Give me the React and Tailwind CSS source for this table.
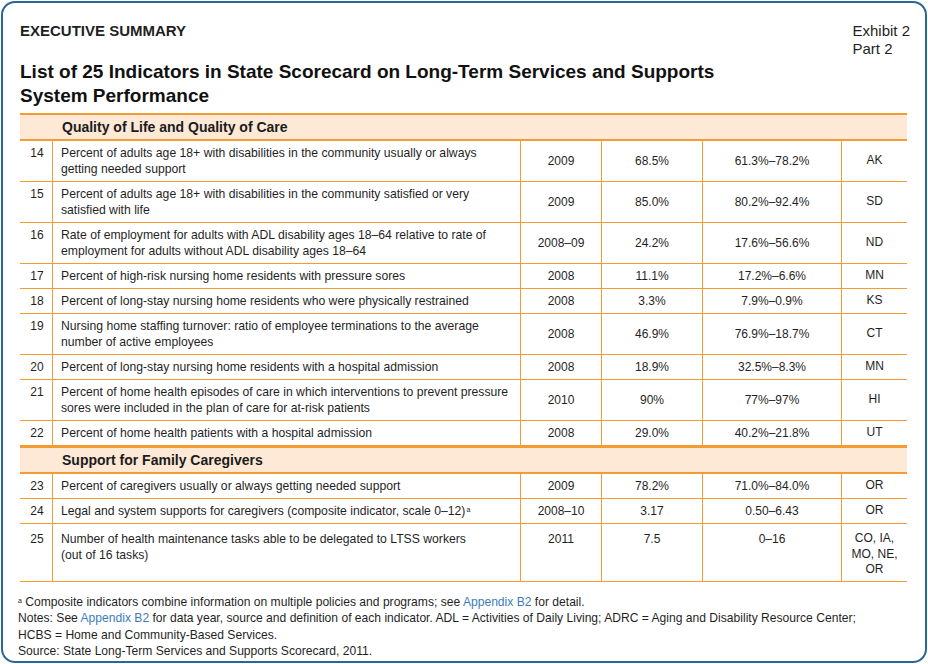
import React from "react";

const OR = "border-[#f59b33]";

const sec1 = [
  { n: "14", d: ["Percent of adults age 18+ with disabilities in the community usually or always", "getting needed support"], y: "2009", v: "68.5%", r: "61.3%–78.2%", s: ["AK"], h: "h-[41px]" },
  { n: "15", d: ["Percent of adults age 18+ with disabilities in the community satisfied or very", "satisfied with life"], y: "2009", v: "85.0%", r: "80.2%–92.4%", s: ["SD"], h: "h-[41px]" },
  { n: "16", d: ["Rate of employment for adults with ADL disability ages 18–64 relative to rate of", "employment for adults without ADL disability ages 18–64"], y: "2008–09", v: "24.2%", r: "17.6%–56.6%", s: ["ND"], h: "h-[41px]" },
  { n: "17", d: ["Percent of high-risk nursing home residents with pressure sores"], y: "2008", v: "11.1%", r: "17.2%–6.6%", s: ["MN"], h: "h-[25px]" },
  { n: "18", d: ["Percent of long-stay nursing home residents who were physically restrained"], y: "2008", v: "3.3%", r: "7.9%–0.9%", s: ["KS"], h: "h-[25px]" },
  { n: "19", d: ["Nursing home staffing turnover: ratio of employee terminations to the average", "number of active employees"], y: "2008", v: "46.9%", r: "76.9%–18.7%", s: ["CT"], h: "h-[41px]" },
  { n: "20", d: ["Percent of long-stay nursing home residents with a hospital admission"], y: "2008", v: "18.9%", r: "32.5%–8.3%", s: ["MN"], h: "h-[25px]" },
  { n: "21", d: ["Percent of home health episodes of care in which interventions to prevent pressure", "sores were included in the plan of care for at-risk patients"], y: "2010", v: "90%", r: "77%–97%", s: ["HI"], h: "h-[41px]" },
  { n: "22", d: ["Percent of home health patients with a hospital admission"], y: "2008", v: "29.0%", r: "40.2%–21.8%", s: ["UT"], h: "h-[25px]" },
];

const sec2 = [
  { n: "23", d: ["Percent of caregivers usually or always getting needed support"], y: "2009", v: "78.2%", r: "71.0%–84.0%", s: ["OR"], h: "h-[25px]" },
  { n: "24", d: ["Legal and system supports for caregivers (composite indicator, scale 0–12)"], sup: true, y: "2008–10", v: "3.17", r: "0.50–6.43", s: ["OR"], h: "h-[25px]" },
  { n: "25", d: ["Number of health maintenance tasks able to be delegated to LTSS workers", "(out of 16 tasks)"], y: "2011", v: "7.5", r: "0–16", s: ["CO, IA,", "MO, NE,", "OR"], h: "h-[58px]", top: true },
];

function Row({ row }) {
  const al = row.top ? "items-start pt-[7px]" : "items-center";
  const cell = `flex ${al} border-r ${OR}`;
  return (
    <div className={`grid grid-cols-[33px_468px_81px_101px_139px_65px] border-b ${OR} ${row.h}`}>
      <div className={`${cell} ${row.top ? "" : "!items-start pt-[4px]"} justify-center pl-[2px]`}>
        <span className="leading-4">{row.n}</span>
      </div>
      <div className={`${cell} ${row.top ? "" : "!items-start pt-[4px]"} pl-[8px]`}>
        <div className="leading-4 whitespace-nowrap text-[12.2px]">
          {row.d.map((l, i) => (
            <div key={i}>
              {l}
              {row.sup && i === row.d.length - 1 ? <sup className="text-[7px] ml-px">a</sup> : null}
            </div>
          ))}
        </div>
      </div>
      <div className={`${cell} justify-center`}><span className="leading-4">{row.y}</span></div>
      <div className={`${cell} justify-center`}><span className="leading-4">{row.v}</span></div>
      <div className={`${cell} justify-center`}><span className="leading-4">{row.r}</span></div>
      <div className={`flex ${al} justify-center`}>
        <div className="text-center leading-[15.5px]">
          {row.s.map((l, i) => (
            <div key={i}>{l}</div>
          ))}
        </div>
      </div>
    </div>
  );
}

function Section({ title }) {
  return (
    <div className={`h-[28px] border-y-2 ${OR} bg-[#fde9d5] flex items-center pl-[42px] text-[14px] font-bold text-[#1b1b1b]`}>
      {title}
    </div>
  );
}

export default function App() {
  return (
    <div className="w-[928px] h-[664px] bg-white p-px" style={{ fontFamily: '"Liberation Sans", Arial, sans-serif' }}>
      <div className="w-[926px] h-[662px] border-2 border-[#2a6596] rounded-[14px] pt-[19px] text-[#1f1f1f]">
        <div className="flex justify-between pl-[17px] pr-[15px]">
          <div className="text-[15px] leading-[18px] font-bold">EXECUTIVE SUMMARY</div>
          <div className="text-[15px] leading-[18px]">
            <div>Exhibit 2</div>
            <div>Part 2</div>
          </div>
        </div>
        <h1 className="mt-[2px] pl-[17px] text-[19px] leading-[24px] font-bold text-[#111]">
          List of 25 Indicators in State Scorecard on Long-Term Services and Supports
          <br />
          System Performance
        </h1>
        <div className="mt-[5px] ml-[17px] w-[887px] text-[12px]">
          <Section title="Quality of Life and Quality of Care" />
          {sec1.map((r) => (
            <Row key={r.n} row={r} />
          ))}
          <Section title="Support for Family Caregivers" />
          {sec2.map((r) => (
            <Row key={r.n} row={r} />
          ))}
        </div>
        <div className="mt-[12px] ml-[15px] text-[12.1px] leading-[16.3px]">
          <div>
            <sup className="text-[7px]">a</sup> Composite indicators combine information on multiple policies and programs; see{" "}
            <span className="text-[#3b7cbc]">Appendix B2</span> for detail.
          </div>
          <div>
            Notes: See <span className="text-[#3b7cbc]">Appendix B2</span> for data year, source and definition of each indicator. ADL = Activities of Daily Living; ADRC = Aging and Disability Resource Center;
          </div>
          <div>HCBS = Home and Community-Based Services.</div>
          <div>Source: State Long-Term Services and Supports Scorecard, 2011.</div>
        </div>
      </div>
    </div>
  );
}
